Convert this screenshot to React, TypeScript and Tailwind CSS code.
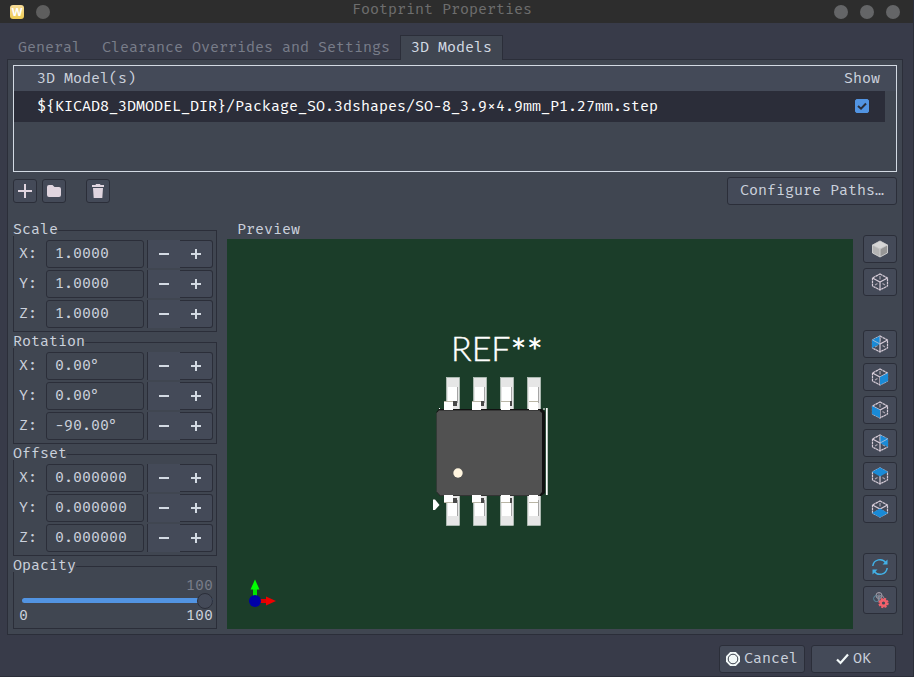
import { useState } from "react";
import type { ReactNode } from "react";

const EDGE = "#d6ccd8";
const BLUE = "#1a8ad6";

type Face = "solid" | "none" | "backLeft" | "frontRight" | "frontLeft" | "backRight" | "top" | "bottom";

const FACES: Record<Exclude<Face, "solid" | "none">, string> = {
  backLeft: "1,5 9,1 9,9 1,13",
  frontRight: "9,9 17,5 17,13 9,17",
  frontLeft: "1,5 9,9 9,17 1,13",
  backRight: "9,1 17,5 17,13 9,9",
  top: "9,0.5 17,5 9,9.5 1,5",
  bottom: "1,13 9,8.5 17,13 9,17.5",
};

const FRONT_EDGES: Record<Exclude<Face, "solid">, string> = {
  none: "M1.500 5 9 9 16.500 5M9 9V17",
  backLeft: "M1.500 5 9 9 16.500 5M9 9V17",
  frontRight: "M1.500 5 9 9 16.500 5M9 9V17",
  frontLeft: "M1.500 5 9 9 16.500 5M9 9V17",
  backRight: "M1.500 5 9 9 16.500 5M9 9V17",
  top: "M9 9V17",
  bottom: "M1.500 5 9 9 16.500 5M9 9V12",
};

function CubeIcon({ face }: { face: Face }) {
  if (face === "solid") {
    return (
      <svg width="18" height="18" viewBox="0 0 18 18" aria-hidden="true">
        <polygon points="9,1 16.5,5 9,9 1.5,5" fill="#d6d6d6" />
        <polygon points="1.5,5 9,9 9,17 1.5,13" fill="#b4b4b4" />
        <polygon points="9,9 16.5,5 16.5,13 9,17" fill="#969696" />
        <path d="M9 1 16.500 5V13L9 17 1.500 13V5ZM1.500 5 9 9 16.500 5M9 9V17" fill="none" stroke="#d2d2d2" strokeWidth="0.9" />
      </svg>
    );
  }
  return (
    <svg width="18" height="18" viewBox="0 0 18 18" fill="none" aria-hidden="true">
      <path d="M9 3V6.500M4 12 6.500 10.500M14 12 11.500 10.500" stroke="#aaa4b0" strokeWidth="1.2" />
      <path d="M9 1 16.500 5V13L9 17 1.500 13V5Z" stroke={EDGE} strokeWidth="1.2" strokeDasharray="2.6 0.4" />
      <path d={FRONT_EDGES[face]} stroke={EDGE} strokeWidth="1.2" />
      {face !== "none" && <polygon points={FACES[face]} fill={BLUE} />}
      {face === "backLeft" && <path d="M1.500 5 9 9V1" stroke={EDGE} strokeWidth="0.7" />}
      {face === "backRight" && <path d="M16.500 5 9 9V1" stroke={EDGE} strokeWidth="0.7" />}
    </svg>
  );
}

function RefreshIcon() {
  return (
    <svg width="18" height="18" viewBox="0 0 18 18" fill="none" stroke="#42b0e6" strokeWidth="1.5" aria-hidden="true">
      <path d="M1.800 8A7.200 7.200 0 0 1 15 5M16.200 10A7.200 7.200 0 0 1 3 13" />
      <path d="M16.500 1.500V6.500H11.500ZM1.500 16.500V11.500H6.500Z" fill="#42b0e6" stroke="none" />
    </svg>
  );
}

function RenderOptionsIcon() {
  return (
    <svg width="18" height="18" viewBox="0 0 18 18" fill="none" aria-hidden="true">
      <circle cx="8" cy="4.500" r="3" stroke="#a8a2ae" />
      <circle cx="5.600" cy="7.600" r="3" stroke="#5a8ca0" />
      <circle cx="10" cy="7.600" r="3" stroke="#8f8a97" />
      <path d="M5 5H11M8 2V9" stroke="#8f8a97" strokeWidth="0.8" />
      <circle cx="12.500" cy="12" r="2.800" stroke="#f2616b" strokeWidth="2.400" />
      <circle cx="12.500" cy="12" r="4.300" stroke="#f2616b" strokeWidth="1.800" strokeDasharray="2.100 1.280" />
    </svg>
  );
}

function ToolButton({ label, children }: { label: string; children: ReactNode }) {
  return (
    <button
      type="button"
      aria-label={label}
      className="flex size-6 items-center justify-center rounded-[3px] border border-[#2b2e39] bg-[#444a58]"
    >
      {children}
    </button>
  );
}

function ViewButton({ label, children }: { label: string; children: ReactNode }) {
  return (
    <button
      type="button"
      aria-label={label}
      className="flex h-7 w-[34px] items-center justify-center rounded-[3px] border border-[#2b2e39] bg-[#444a58]"
    >
      {children}
    </button>
  );
}

function Group({ title, children }: { title: string; children: ReactNode }) {
  return (
    <fieldset className="min-w-0 border border-[#2b2e39] pt-1 pr-[3px] pb-[3px] pl-[5px]">
      <legend className="-ml-1.5 h-3 bg-[#404651] leading-[10px]">{title}</legend>
      {children}
    </fieldset>
  );
}

function SpinRow({ group, axis, value }: { group: string; axis: string; value: string }) {
  const [text, setText] = useState(value);
  const id = `${group}-${axis}`;
  return (
    <div className="flex h-7 items-center">
      <label htmlFor={id} className="w-[27px] shrink-0 pb-0.5">
        {axis}:
      </label>
      <input
        id={id}
        value={text}
        onChange={(e) => setText(e.target.value)}
        className="h-7 w-[98px] min-w-0 rounded-[3px] border border-[#2b2e39] bg-[#404651] px-2 pb-0.5 outline-none"
      />
      <div className="ml-[3px] flex h-7 flex-1">
        <button
          type="button"
          aria-label={`Decrease ${group} ${axis}`}
          className="flex flex-1 items-center justify-center border-l border-[#2b2e39] bg-[#444a58]"
        >
          <svg width="12" height="12" viewBox="0 0 12 12" aria-hidden="true">
            <path d="M1 6H11" stroke="#d3dae3" strokeWidth="2" />
          </svg>
        </button>
        <button
          type="button"
          aria-label={`Increase ${group} ${axis}`}
          className="flex flex-1 items-center justify-center rounded-r-[3px] border-y border-r border-[#2b2e39] bg-[#444a58]"
        >
          <svg width="12" height="12" viewBox="0 0 12 12" aria-hidden="true">
            <path d="M1 6H11M6 1V11" stroke="#d3dae3" strokeWidth="2" />
          </svg>
        </button>
      </div>
    </div>
  );
}

const GROUPS = [
  { title: "Scale", values: ["1.0000", "1.0000", "1.0000"] },
  { title: "Rotation", values: ["0.00°", "0.00°", "-90.00°"] },
  { title: "Offset", values: ["0.000000", "0.000000", "0.000000"] },
];

const AXES = ["X", "Y", "Z"];

const VIEWS: { label: string; face: Face }[] = [
  { label: "View left", face: "backLeft" },
  { label: "View right", face: "frontRight" },
  { label: "View front", face: "frontLeft" },
  { label: "View back", face: "backRight" },
  { label: "View top", face: "top" },
  { label: "View bottom", face: "bottom" },
];

const PINS = [
  { pad: 220, lead: 217 },
  { pad: 247, lead: 245 },
  { pad: 274, lead: 274 },
  { pad: 301, lead: 302 },
];

function BoardPreview() {
  return (
    <svg viewBox="0 0 626 390" className="block h-full w-full" role="img" aria-label="3D preview of the SO-8 package">
      <text
        x="224"
        y="122"
        fontSize="34"
        fontWeight="300"
        fill="#ffffff"
        stroke="#ffffff"
        strokeWidth="0.4"
        className="font-['Lato',sans-serif]"
      >
        REF
        <tspan fontSize="38" strokeWidth="0.8" dy="5">
          **
        </tspan>
      </text>
      {PINS.map(({ pad, lead }, i) => (
        <g key={pad}>
          <rect x={pad - 0.5} y="138.5" width="13" height="32" fill="#e6e6e6" stroke="#c9d2cb" strokeWidth="0.6" />
          <rect x={pad + 1} y="148" width="9" height="14" fill="#ffffff" />
          <path d={`M${pad + 10.5} 148V164`} stroke="#a5a5a5" />
          {i < 3 && <rect x={lead + 8} y="162" width={5 - i} height="5" fill="#484848" />}
          <rect x={lead} y="162" width="9" height="10" fill="#ffffff" />
          <path d={`M${lead} 162.500H${lead + 9}`} stroke="#b9b5a5" />
          <rect x={pad - 0.5} y="256" width="13" height="30.5" fill="#e6e6e6" stroke="#c9d2cb" strokeWidth="0.6" />
          <rect x={pad + 1} y="263" width="9" height="14" fill="#ffffff" />
          <path d={`M${pad + 10.5} 261V277`} stroke="#a5a5a5" />
          {i < 3 && <rect x={lead + 8} y="259" width={5 - i} height="5" fill="#484848" />}
        </g>
      ))}
      <path d="M319.800 169V256" stroke="#ffffff" strokeWidth="1.8" />
      <path d="M212.500 171V169M317 171V169" stroke="#ffffff" />
      <path d="M212 170H315L318 173V254L314 257H213L209.500 253V173Z" fill="#111111" />
      <path d="M212 171.500H312L315 174V253L312 256.500H213L209.500 253V174Z" fill="#515151" />
      <path d="M212 171V171.500H313" stroke="#383838" fill="none" />
      <path d="M210 253 213 256.500H313" stroke="#343434" fill="none" />
      {PINS.map(({ lead }) => (
        <g key={lead}>
          <rect x={lead} y="163" width="9" height="8" fill="#ffffff" />
          <rect x={lead} y="256" width="9" height="8" fill="#ffffff" />
          <path d={`M${lead} 263.500H${lead + 9}`} stroke="#b9b5a5" />
        </g>
      ))}
      <circle cx="231" cy="234" r="4.700" fill="#fff5df" />
      <path d="M206 260.500H208L212.500 266 208 271H206Z" fill="#ffffff" />
      <path d="M29 362H40" stroke="#e00000" strokeWidth="4" />
      <path d="M39 357.500 49 362 39 366.500Z" fill="#f00000" />
      <path d="M28 358V349" stroke="#00e400" strokeWidth="4" />
      <path d="M23.500 350.500 28 340.500 32.500 350.500Z" fill="#00ff00" />
      <circle cx="28" cy="362" r="6" fill="#0000a8" />
    </svg>
  );
}

export default function App() {
  const [shown, setShown] = useState(true);
  const [opacity, setOpacity] = useState(100);

  return (
    <div className="flex min-h-screen flex-col border-r border-b border-[#2b2e39] bg-[#383b49] font-['Fira_Mono','DejaVu_Sans_Mono','Liberation_Mono',monospace] text-[15px] leading-5 text-[#cbd1dc]">
      <header className="flex h-[23px] items-center justify-between bg-[#2d2d2d] pr-[13px] pl-2.5">
        <div className="flex items-center gap-3">
          <span className="flex size-3.5 items-center justify-center rounded-[3px] bg-linear-to-b from-[#f8dc98] to-[#eecb50] font-['Open_Sans',sans-serif] text-[11px] leading-3 font-bold text-white">
            W
          </span>
          <button type="button" aria-label="Pin window" className="size-3.5 rounded-full bg-[#5e5e5e]" />
        </div>
        <h1 className="pb-1.5 text-[#6e6e6e]">Footprint Properties</h1>
        <div className="flex gap-3">
          <button type="button" aria-label="Minimize" className="size-3.5 rounded-full bg-[#646567]" />
          <button type="button" aria-label="Maximize" className="size-3.5 rounded-full bg-[#646567]" />
          <button type="button" aria-label="Close" className="size-3.5 rounded-full bg-[#646567]" />
        </div>
      </header>

      <div className="flex flex-1 flex-col pt-3 pr-2.5 pb-[3px] pl-[7px]">
        <div role="tablist" className="z-10 -mb-px flex h-[25px] text-[#797d89]">
          <button type="button" role="tab" aria-selected="false" className="border border-b-0 border-transparent px-2.5 pb-0.5">
            General
          </button>
          <button
            type="button"
            role="tab"
            aria-selected="false"
            className="-ml-px border border-b-0 border-transparent px-2.5 pb-0.5"
          >
            Clearance Overrides and Settings
          </button>
          <button
            type="button"
            role="tab"
            aria-selected="true"
            className="-ml-px border border-b-0 border-[#2b2e39] bg-[#404651] px-2.5 pb-0.5 text-[#d3dae3]"
          >
            3D Models
          </button>
        </div>

        <main className="flex flex-1 flex-col border border-[#2b2e39] bg-[#404651] p-[5px]">
          <div className="h-[107px] border border-[#d3dae3]">
            <table className="w-full table-fixed border-collapse">
              <colgroup>
                <col />
                <col className="w-[46px]" />
                <col className="w-[11px]" />
              </colgroup>
              <thead>
                <tr className="h-[25px] bg-[#444a58]">
                  <th className="p-0 pb-0.5 pl-[23px] text-left font-normal">3D Model(s)</th>
                  <th className="p-0 pb-0.5 text-center font-normal">Show</th>
                  <th className="p-0" />
                </tr>
              </thead>
              <tbody>
                <tr className="h-[31px] text-white">
                  <td className="bg-[#2b2d39] p-0 pb-0.5 pl-[23px] whitespace-nowrap">
                    {"${KICAD8_3DMODEL_DIR}/Package_SO.3dshapes/SO-8_3.9×4.9mm_P1.27mm.step"}
                  </td>
                  <td className="bg-[#2b2d39] p-0 pb-0.5">
                    <div className="mx-auto grid size-3.5">
                      <input
                        type="checkbox"
                        aria-label="Show model"
                        checked={shown}
                        onChange={(e) => setShown(e.target.checked)}
                        className="col-start-1 row-start-1 size-3.5 appearance-none rounded-[2px] border border-[#5294e2] checked:bg-[#5294e2]"
                      />
                      {shown && (
                        <svg
                          viewBox="0 0 14 14"
                          fill="none"
                          stroke="#2b2e39"
                          strokeWidth="2"
                          className="pointer-events-none col-start-1 row-start-1 size-3.5"
                          aria-hidden="true"
                        >
                          <path d="M3 7 6 9.700 11 4.500" />
                        </svg>
                      )}
                    </div>
                  </td>
                  <td className="p-0" />
                </tr>
              </tbody>
            </table>
          </div>

          <div className="mt-[5px] flex h-7 items-center">
            <div className="flex flex-1 gap-[5px]">
              <ToolButton label="Add model">
                <svg width="14" height="14" viewBox="0 0 14 14" aria-hidden="true">
                  <path d="M0 7H14M7 0V14" stroke="#e0d5df" strokeWidth="2" />
                </svg>
              </ToolButton>
              <ToolButton label="Browse for model">
                <svg width="14" height="14" viewBox="0 0 14 14" aria-hidden="true">
                  <path d="M0 3Q0 1 2 1H5.500L7.500 3H12Q14 3 14 5V11Q14 13 12 13H2Q0 13 0 11Z" fill="#e0d5df" />
                </svg>
              </ToolButton>
              <div className="ml-[15px]">
                <ToolButton label="Remove model">
                  <svg width="14" height="16" viewBox="0 0 14 16" aria-hidden="true">
                    <path d="M1 2H4.500L5 1H9L9.500 2H13V4H1ZM2 5H12L11.300 15H2.700Z" fill="#e0d5df" />
                  </svg>
                </ToolButton>
              </div>
            </div>
            <button type="button" className="h-7 rounded-[3px] border border-[#2b2e39] bg-[#444a58] px-3 pb-0.5">
              Configure Paths…
            </button>
          </div>

          <div className="mt-[13px] flex flex-1 gap-2.5">
            <div className="mt-1.5 flex w-[204px] shrink-0 flex-col gap-1">
              {GROUPS.map(({ title, values }) => (
                <Group key={title} title={title}>
                  <div className="flex flex-col gap-0.5">
                    {AXES.map((axis, i) => (
                      <SpinRow key={axis} group={title} axis={axis} value={values[i]} />
                    ))}
                  </div>
                </Group>
              ))}
              <Group title="Opacity">
                <div className="flex flex-col pb-0.5">
                  <output htmlFor="opacity" className="text-right leading-[18px] text-[#797d89]">
                    {opacity}
                  </output>
                  <input
                    id="opacity"
                    type="range"
                    aria-label="Opacity"
                    min={0}
                    max={100}
                    value={opacity}
                    onChange={(e) => setOpacity(Number(e.target.value))}
                    className="ml-[3px] h-[13px] appearance-none bg-transparent [&::-webkit-slider-runnable-track]:h-[5px] [&::-webkit-slider-runnable-track]:rounded-full [&::-webkit-slider-runnable-track]:bg-[#5294e2] [&::-webkit-slider-thumb]:-mt-[5px] [&::-webkit-slider-thumb]:size-4 [&::-webkit-slider-thumb]:appearance-none [&::-webkit-slider-thumb]:rounded-full [&::-webkit-slider-thumb]:border [&::-webkit-slider-thumb]:border-[#2b2e39] [&::-webkit-slider-thumb]:bg-[#444a58]"
                  />
                  <div className="flex justify-between leading-4">
                    <span>0</span>
                    <span>100</span>
                  </div>
                </div>
              </Group>
            </div>

            <section className="flex min-w-0 flex-1 flex-col">
              <h2 className="h-[21px] pl-2.5 leading-[22px]">Preview</h2>
              <div className="min-h-[390px] flex-1 bg-[#1b3d29]">
                <BoardPreview />
              </div>
            </section>

            <div className="mt-[17px] flex flex-col gap-[34px]">
              <div className="flex flex-col gap-[5px]">
                <ViewButton label="Solid render">
                  <CubeIcon face="solid" />
                </ViewButton>
                <ViewButton label="Orthographic projection">
                  <CubeIcon face="none" />
                </ViewButton>
              </div>
              <div className="flex flex-col gap-[5px]">
                {VIEWS.map(({ label, face }) => (
                  <ViewButton key={label} label={label}>
                    <CubeIcon face={face} />
                  </ViewButton>
                ))}
              </div>
              <div className="-mt-1 flex flex-col gap-[5px]">
                <ViewButton label="Reload board">
                  <RefreshIcon />
                </ViewButton>
                <ViewButton label="Render options">
                  <RenderOptionsIcon />
                </ViewButton>
              </div>
            </div>
          </div>
        </main>

        <footer className="mt-2.5 flex justify-end gap-1.5 pr-[7px]">
          <button
            type="button"
            className="flex h-7 w-[86px] items-center justify-center gap-1 rounded-[3px] border border-[#2b2e39] bg-[#444a58]"
          >
            <svg width="14" height="14" viewBox="0 0 14 14" aria-hidden="true">
              <path d="M4.200 0H9.800L14 4.200V9.800L9.800 14H4.200L0 9.800V4.200Z" fill="#f2f8f8" />
              <circle cx="7" cy="7" r="4.800" fill="#f2f8f8" stroke="#3a404c" strokeWidth="1" />
            </svg>
            <span className="pb-0.5">Cancel</span>
          </button>
          <button
            type="button"
            className="flex h-7 w-[85px] items-center justify-center gap-1 rounded-[3px] border border-[#2b2e39] bg-[#444a58]"
          >
            <svg width="13" height="12" viewBox="0 0 13 12" fill="none" aria-hidden="true">
              <path d="M1 6.500 4.500 10 12 1.500" stroke="#f2f8f8" strokeWidth="2.200" />
            </svg>
            <span className="pb-0.5">OK</span>
          </button>
        </footer>
      </div>
    </div>
  );
}
